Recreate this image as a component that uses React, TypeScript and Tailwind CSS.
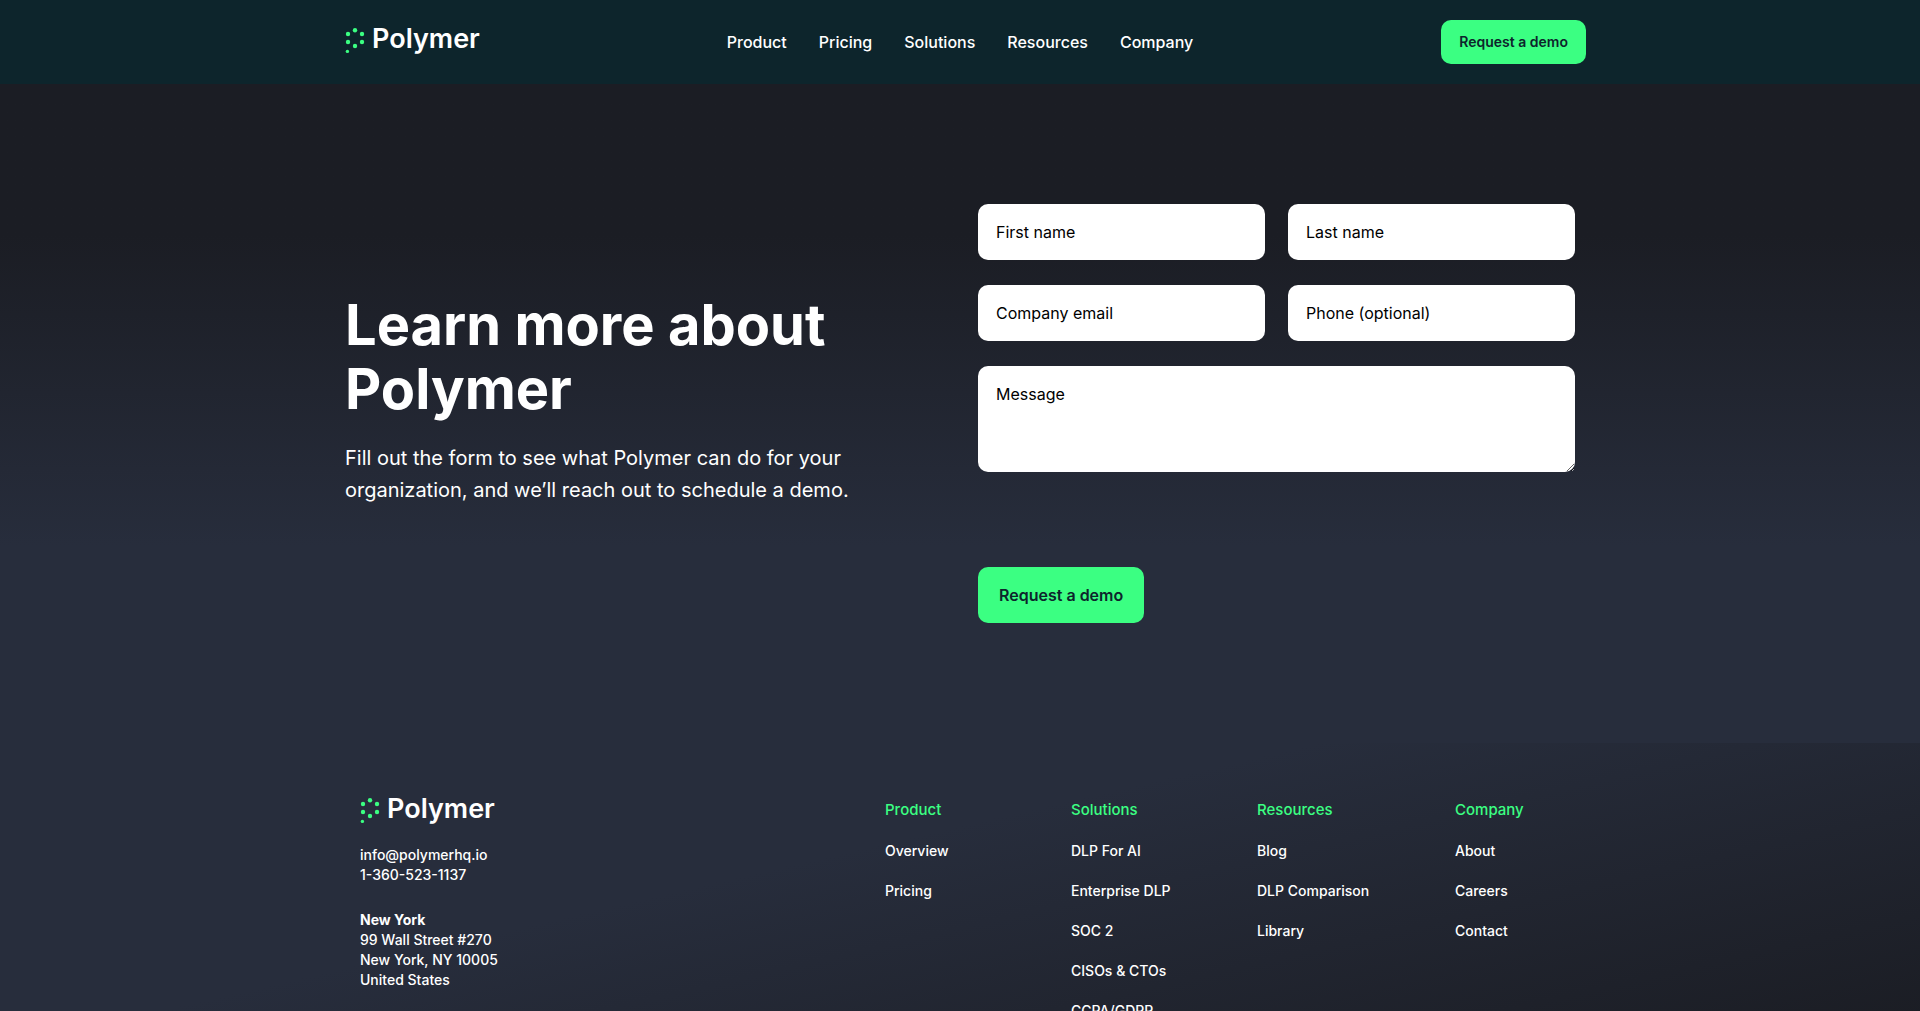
import React from "react";

const navItems = ["Product", "Pricing", "Solutions", "Resources", "Company"];

const footerColumns = [
  { title: "Product", links: ["Overview", "Pricing"] },
  {
    title: "Solutions",
    links: ["DLP For AI", "Enterprise DLP", "SOC 2", "CISOs & CTOs", "CCPA/GDPR"],
  },
  { title: "Resources", links: ["Blog", "DLP Comparison", "Library"] },
  { title: "Company", links: ["About", "Careers", "Contact"] },
];

function Logo() {
  return (
    <a href="#" className="flex items-start gap-[7px]" aria-label="Polymer home">
      <svg width="20" height="28" viewBox="0 0 20 28" fill="#3bff82" className="shrink-0" aria-hidden="true">
        <circle cx="10" cy="2.2" r="2.2" />
        <circle cx="3" cy="6" r="2.2" />
        <circle cx="17" cy="6" r="2.2" />
        <circle cx="3" cy="14" r="2.2" />
        <circle cx="17" cy="14" r="2.2" />
        <circle cx="10" cy="18" r="2.2" />
        <circle cx="2.4" cy="23.4" r="1.7" />
      </svg>
      <span className="text-[27px] leading-[22px] font-semibold">Polymer</span>
    </a>
  );
}

function Field({ id, label, type = "text" }: { id: string; label: string; type?: string }) {
  return (
    <input
      id={id}
      type={type}
      aria-label={label}
      placeholder={label}
      className="block h-14 w-full rounded-[10px] bg-white px-[18px] text-base text-black placeholder:text-black"
    />
  );
}

export default function App() {
  return (
    <div className="min-h-screen bg-[#272d3c] font-['Inter',sans-serif] text-white">
      <header className="bg-[#0d252c]">
        <div className="mx-auto grid max-w-[1252px] grid-cols-[1fr_auto_1fr] items-center py-5">
          <div className="flex pl-[11px]">
            <Logo />
          </div>
          <nav className="flex gap-8 text-base font-medium">
            {navItems.map((item) => (
              <a key={item} href="#">{item}</a>
            ))}
          </nav>
          <a
            href="#"
            className="flex h-11 items-center justify-self-end rounded-[10px] bg-[#3bff82] px-[18px] text-sm font-semibold text-[#0d252c]"
          >
            Request a demo
          </a>
        </div>
      </header>

      <main className="bg-linear-to-b from-[#1b1d24] from-23% to-[#272d3c] to-70% py-30">
        <div className="mx-auto grid max-w-[1252px] grid-cols-[633fr_597fr] items-center px-[11px]">
          <section className="pb-[29px]">
            <h1 className="text-[56px] leading-16 font-bold">
              Learn more about
              <br />
              Polymer
            </h1>
            <p className="mt-[21px] text-xl leading-8">
              Fill out the form to see what Polymer can do for your
              <br />
              organization, and we’ll reach out to schedule a demo.
            </p>
          </section>
          <form onSubmit={(e) => e.preventDefault()}>
            <div className="grid grid-cols-2 gap-x-[23px] gap-y-[25px]">
              <Field id="first-name" label="First name" />
              <Field id="last-name" label="Last name" />
              <Field id="email" label="Company email" type="email" />
              <Field id="phone" label="Phone (optional)" type="tel" />
              <textarea
                id="message"
                aria-label="Message"
                placeholder="Message"
                className="col-span-2 block h-[106px] w-full resize rounded-[10px] bg-white px-[18px] py-4 text-base text-black placeholder:text-black"
              />
            </div>
            <button
              type="submit"
              className="mt-[95px] h-14 rounded-[10px] bg-[#3bff82] px-[21px] text-base font-semibold text-[#0d252c]"
            >
              Request a demo
            </button>
          </form>
        </div>
      </main>

      <footer className="bg-linear-167 from-[#272d3c] from-38% to-[#1b1d24] to-90% pt-[55px] pb-20">
        <div className="mx-auto grid max-w-[1200px] grid-cols-[525fr_186fr_186fr_198fr_105fr]">
          <div className="text-sm leading-5 font-medium">
            <Logo />
            <address className="mt-[19px] not-italic">
              <a href="mailto:info@polymerhq.io" className="block">info@polymerhq.io</a>
              <a href="tel:13605231137" className="block">1-360-523-1137</a>
              <p className="mt-[25px]">
                <strong className="font-bold">New York</strong>
                <br />
                99 Wall Street #270
                <br />
                New York, NY 10005
                <br />
                United States
              </p>
            </address>
          </div>
          {footerColumns.map((col) => (
            <section key={col.title}>
              <h2 className="text-[15px] leading-6 font-medium text-[#3bff82]">{col.title}</h2>
              <ul className="mt-[19px] flex flex-col gap-5 text-sm leading-5 font-medium">
                {col.links.map((link) => (
                  <li key={link}>
                    <a href="#">{link}</a>
                  </li>
                ))}
              </ul>
            </section>
          ))}
        </div>
      </footer>
    </div>
  );
}
